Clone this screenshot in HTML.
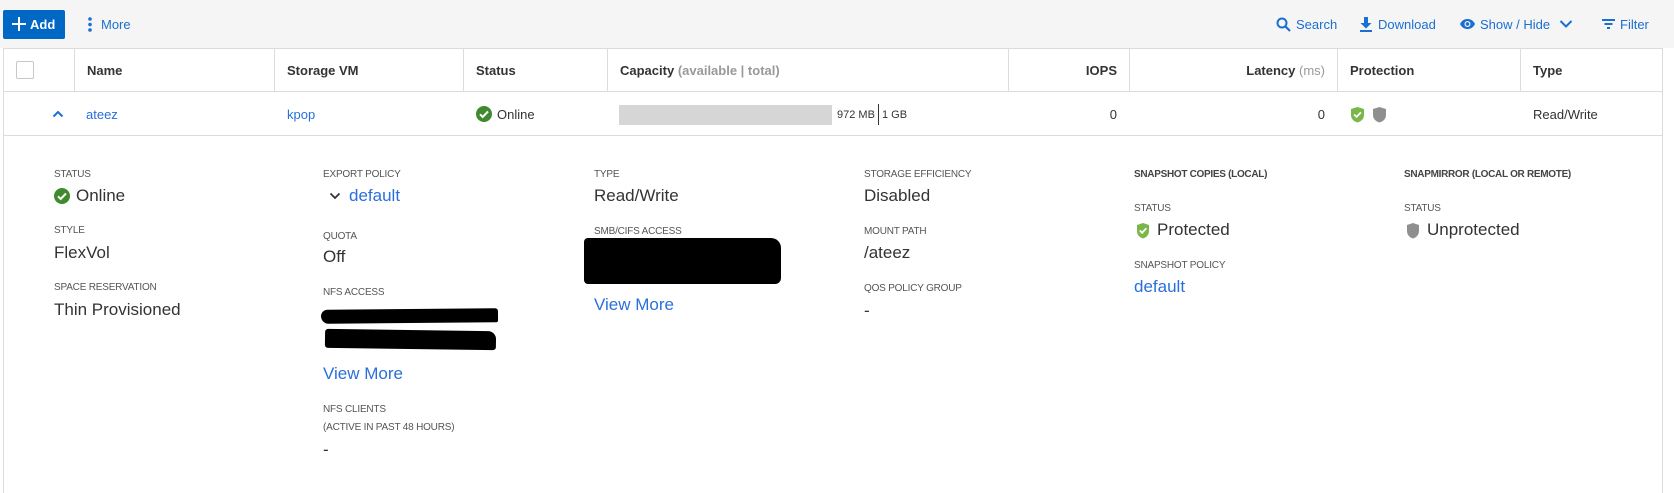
<!DOCTYPE html>
<html><head><meta charset="utf-8"><style>
*{margin:0;padding:0;box-sizing:border-box}
body{width:1674px;height:493px;background:#fff;font-family:"Liberation Sans",sans-serif;position:relative;overflow:hidden;color:#333}
.a{position:absolute;white-space:nowrap}
.tb{position:absolute;left:0;top:0;width:1674px;height:48px;background:#f5f5f5}
.blue{color:#1f6fd6}
.lbl{font-size:10px;color:#555;line-height:12px;letter-spacing:-0.2px}
.bl{font-size:10px;color:#444;font-weight:bold;line-height:12px;letter-spacing:-0.3px}
.val{font-size:17px;line-height:20px;color:#333}
.val.blue,.cell.blue{color:#2a6fdb}
.hd{font-size:13px;font-weight:bold;color:#333;line-height:16px}
.cell{font-size:13px;line-height:16px;color:#333}
.vl{position:absolute;top:48px;height:87px;width:1px;background:#dcdcdc}
.hl{position:absolute;left:3px;width:1659px;height:1px;background:#dcdcdc}
.tool{font-size:13px;color:#1a6fd1;line-height:16px}
</style></head><body>
<div class="tb"></div>
<div class="a" style="left:3px;top:10px;width:62px;height:29px;background:#0067c5;border-radius:2px"></div>
<svg class="a" style="left:11px;top:16px" width="16" height="16"><path d="M8 1v14M1 8h14" stroke="#fff" stroke-width="2"/></svg>
<div class="a" style="left:30px;top:17px;color:#fff;font-size:13px;font-weight:bold;line-height:16px">Add</div>
<svg class="a" style="left:87px;top:16px" width="6" height="17"><circle cx="3" cy="3" r="1.8" fill="#1a6fd1"/><circle cx="3" cy="8.5" r="1.8" fill="#1a6fd1"/><circle cx="3" cy="14" r="1.8" fill="#1a6fd1"/></svg>
<div class="a tool" style="left:101px;top:17px">More</div>

<svg class="a" style="left:1276px;top:17px" width="15" height="15"><circle cx="6" cy="6" r="4.5" fill="none" stroke="#1a6fd1" stroke-width="2"/><path d="M9.5 9.5l4.5 4.5" stroke="#1a6fd1" stroke-width="2.2"/></svg>
<div class="a tool" style="left:1296px;top:17px">Search</div>
<svg class="a" style="left:1359px;top:16px" width="14" height="16"><path d="M5 1h4v6h3.5L7 12.5 1.5 7H5z" fill="#1a6fd1"/><rect x="1" y="14" width="12" height="2" fill="#1a6fd1"/></svg>
<div class="a tool" style="left:1378px;top:17px">Download</div>
<svg class="a" style="left:1459px;top:18px" width="17" height="12"><path d="M1 6C3 2 6 1 8.5 1S14 2 16 6c-2 4-5 5-7.5 5S3 10 1 6z" fill="#1a6fd1"/><circle cx="8.5" cy="6" r="3" fill="#f5f5f5"/><circle cx="8.5" cy="6" r="1.8" fill="#1a6fd1"/></svg>
<div class="a tool" style="left:1480px;top:17px">Show / Hide</div>
<svg class="a" style="left:1559px;top:19px" width="14" height="10"><path d="M1.5 2l5.5 5.5L12.5 2" stroke="#1a6fd1" stroke-width="2" fill="none"/></svg>
<svg class="a" style="left:1601px;top:18px" width="15" height="12"><path d="M1 2h13M3.5 6h8M6 10h3" stroke="#1a6fd1" stroke-width="2"/></svg>
<div class="a tool" style="left:1620px;top:17px">Filter</div>

<div class="hl" style="top:48px"></div>
<div class="hl" style="top:91px"></div>
<div class="hl" style="top:135px"></div>
<div class="a" style="left:3px;top:48px;width:1px;height:445px;background:#dcdcdc"></div>
<div class="a" style="left:1662px;top:48px;width:1px;height:445px;background:#dcdcdc"></div>
<div class="vl" style="left:74px;height:43px"></div>
<div class="vl" style="left:274px;height:43px"></div>
<div class="vl" style="left:463px;height:43px"></div>
<div class="vl" style="left:607px;height:43px"></div>
<div class="vl" style="left:1008px;height:43px"></div>
<div class="vl" style="left:1129px;height:43px"></div>
<div class="vl" style="left:1337px;height:43px"></div>
<div class="vl" style="left:1520px;height:43px"></div>

<div class="a" style="left:16px;top:61px;width:18px;height:18px;border:1px solid #c8c8c8;border-radius:2px;background:#fff"></div>
<div class="a hd" style="left:87px;top:63px">Name</div>
<div class="a hd" style="left:287px;top:63px">Storage VM</div>
<div class="a hd" style="left:476px;top:63px">Status</div>
<div class="a hd" style="left:620px;top:63px">Capacity <span style="color:#999">(available | total)</span></div>
<div class="a hd" style="right:557px;top:63px">IOPS</div>
<div class="a hd" style="right:349px;top:63px">Latency <span style="color:#999;font-weight:normal">(ms)</span></div>
<div class="a hd" style="left:1350px;top:63px">Protection</div>
<div class="a hd" style="left:1533px;top:63px">Type</div>

<svg class="a" style="left:52px;top:110px" width="12" height="8"><path d="M1.5 6.5L6 2l4.5 4.5" stroke="#1a6fd1" stroke-width="2" fill="none"/></svg>
<div class="a cell blue" style="left:86px;top:107px">ateez</div>
<div class="a cell blue" style="left:287px;top:107px">kpop</div>
<svg class="a" style="left:476px;top:106px" width="16" height="16"><circle cx="8" cy="8" r="8" fill="#3f8a2e"/><path d="M4 8.3l2.7 2.7L12 5.5" stroke="#fff" stroke-width="2" fill="none"/></svg>
<div class="a cell" style="left:497px;top:107px">Online</div>
<div class="a" style="left:619px;top:105px;width:213px;height:20px;background:#d6d6d6"></div>
<div class="a" style="left:837px;top:108px;font-size:11px;line-height:14px">972 MB</div>
<div class="a" style="left:878px;top:104px;width:1px;height:21px;background:#333"></div>
<div class="a" style="left:882px;top:108px;font-size:11px;line-height:14px">1 GB</div>
<div class="a cell" style="right:557px;top:107px">0</div>
<div class="a cell" style="right:349px;top:107px">0</div>
<svg class="a" style="left:1350px;top:106px" width="15" height="17"><path d="M7.5 1L14 3v6c0 4-3 6.5-6.5 7.5C4 15.5 1 13 1 9V3z" fill="#7ab648"/><path d="M4.2 8.5l2.4 2.4 4.4-4.6" stroke="#fff" stroke-width="1.8" fill="none"/></svg>
<svg class="a" style="left:1372px;top:106px" width="15" height="17"><path d="M7.5 1L14 3v6c0 4-3 6.5-6.5 7.5C4 15.5 1 13 1 9V3z" fill="#8f8f8f"/></svg>
<div class="a cell" style="left:1533px;top:107px">Read/Write</div>

<div class="a lbl" style="left:54px;top:169px">STATUS</div>
<svg class="a" style="left:54px;top:188px" width="16" height="16"><circle cx="8" cy="8" r="8" fill="#3f8a2e"/><path d="M4 8.3l2.7 2.7L12 5.5" stroke="#fff" stroke-width="2" fill="none"/></svg>
<div class="a val" style="left:76px;top:186px">Online</div>
<div class="a lbl" style="left:54px;top:225px">STYLE</div>
<div class="a val" style="left:54px;top:243px">FlexVol</div>
<div class="a lbl" style="left:54px;top:282px">SPACE RESERVATION</div>
<div class="a val" style="left:54px;top:300px">Thin Provisioned</div>

<div class="a lbl" style="left:323px;top:169px">EXPORT POLICY</div>
<svg class="a" style="left:329px;top:192px" width="12" height="8"><path d="M1.5 1.5L6 6l4.5-4.5" stroke="#333" stroke-width="1.8" fill="none"/></svg>
<div class="a val blue" style="left:349px;top:186px">default</div>
<div class="a lbl" style="left:323px;top:231px">QUOTA</div>
<div class="a val" style="left:323px;top:247px">Off</div>
<div class="a lbl" style="left:323px;top:287px">NFS ACCESS</div>
<div class="a" style="left:321px;top:309px;width:177px;height:14px;background:#000;border-radius:7px 3px 2px 8px;transform:rotate(-0.5deg)"></div>
<div class="a" style="left:325px;top:330px;width:171px;height:19px;background:#000;border-radius:3px 8px 3px 3px;transform:rotate(0.8deg)"></div>
<div class="a val blue" style="left:323px;top:364px">View More</div>
<div class="a lbl" style="left:323px;top:404px">NFS CLIENTS</div>
<div class="a lbl" style="left:323px;top:422px">(ACTIVE IN PAST 48 HOURS)</div>
<div class="a val" style="left:323px;top:440px">-</div>

<div class="a lbl" style="left:594px;top:169px">TYPE</div>
<div class="a val" style="left:594px;top:186px">Read/Write</div>
<div class="a lbl" style="left:594px;top:226px">SMB/CIFS ACCESS</div>
<div class="a" style="left:584px;top:238px;width:197px;height:46px;background:#000;border-radius:4px 10px 6px 4px"></div>
<div class="a val blue" style="left:594px;top:295px">View More</div>

<div class="a lbl" style="left:864px;top:169px">STORAGE EFFICIENCY</div>
<div class="a val" style="left:864px;top:186px">Disabled</div>
<div class="a lbl" style="left:864px;top:226px">MOUNT PATH</div>
<div class="a val" style="left:864px;top:243px">/ateez</div>
<div class="a lbl" style="left:864px;top:283px">QOS POLICY GROUP</div>
<div class="a val" style="left:864px;top:301px">-</div>

<div class="a bl" style="left:1134px;top:169px">SNAPSHOT COPIES (LOCAL)</div>
<div class="a lbl" style="left:1134px;top:203px">STATUS</div>
<svg class="a" style="left:1136px;top:222px" width="14" height="17"><path d="M7 1L13 3v6c0 4-2.8 6.5-6 7.5C3.8 15.5 1 13 1 9V3z" fill="#7ab648"/><path d="M3.8 8.5l2.3 2.3 4.2-4.5" stroke="#fff" stroke-width="1.8" fill="none"/></svg>
<div class="a val" style="left:1157px;top:220px">Protected</div>
<div class="a lbl" style="left:1134px;top:260px">SNAPSHOT POLICY</div>
<div class="a val blue" style="left:1134px;top:277px">default</div>

<div class="a bl" style="left:1404px;top:169px">SNAPMIRROR (LOCAL OR REMOTE)</div>
<div class="a lbl" style="left:1404px;top:203px">STATUS</div>
<svg class="a" style="left:1406px;top:222px" width="14" height="17"><path d="M7 1L13 3v6c0 4-2.8 6.5-6 7.5C3.8 15.5 1 13 1 9V3z" fill="#8f8f8f"/></svg>
<div class="a val" style="left:1427px;top:220px">Unprotected</div>
</body></html>
